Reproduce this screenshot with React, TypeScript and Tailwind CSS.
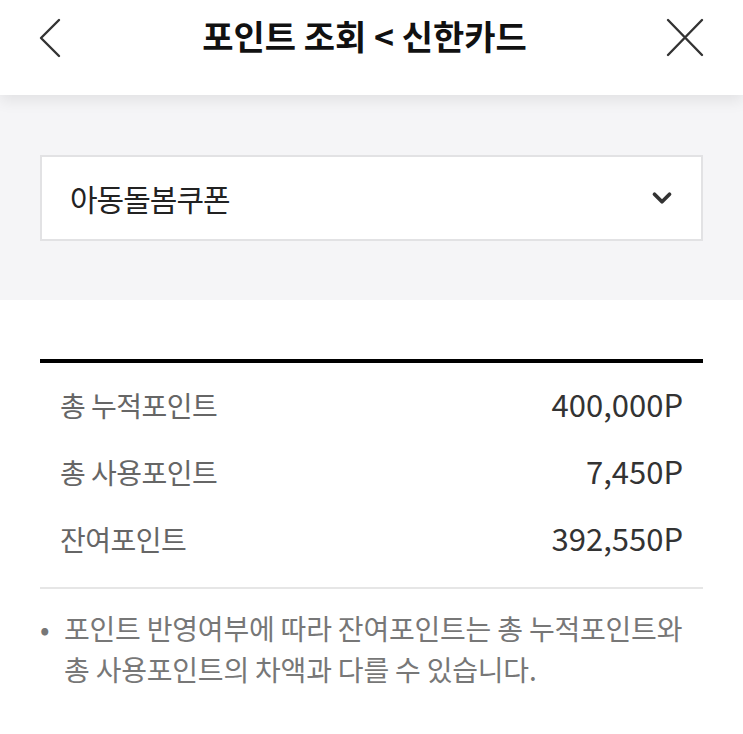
import { ChevronDown } from "lucide-react";

const rows = [
  { label: "총 누적포인트", value: "400,000" },
  { label: "총 사용포인트", value: "7,450" },
  { label: "잔여포인트", value: "392,550" },
];

const App = () => {
  return (
    <div className="w-[743px] h-[734px] bg-white overflow-hidden font-['Noto_Sans_CJK_KR','Noto_Sans',sans-serif]">
      <div className="relative z-10 h-[95px] bg-white flex items-start justify-between pl-[38px] pr-[38px] pt-[18px] shadow-[0_6px_14px_rgba(0,0,0,0.08)]">
        <svg width="26" height="40" viewBox="0 0 26 40" fill="none" stroke="#333" strokeWidth="2.4" strokeLinecap="round" strokeLinejoin="round">
          <path d="M21 2 L3 20 L21 38" />
        </svg>
        <h1 className="text-[34px] font-bold text-[#111] leading-[40px] -mt-[2px]">포인트 조회 &lt; 신한카드</h1>
        <svg width="40" height="40" viewBox="0 0 40 40" fill="none" stroke="#333" strokeWidth="2.4" strokeLinecap="round">
          <path d="M3 2 L37 37 M37 2 L3 37" />
        </svg>
      </div>
      <div className="bg-[#f5f5f7] h-[205px] px-[40px] pt-[60px]">
        <div className="h-[86px] bg-white border-2 border-[#e2e2e4] flex items-center justify-between pl-[28px] pr-[24px]">
          <span className="text-[30px] text-[#222] tracking-[-1px]">아동돌봄쿠폰</span>
          <ChevronDown size={30} strokeWidth={3} className="text-[#333]" />
        </div>
      </div>
      <div className="px-[40px] pt-[59px]">
        <div className="h-[4px] bg-black" />
        <div className="pt-[8px] pb-[15px] border-b-2 border-[#e6e6e6]">
          {rows.map((r) => (
            <div key={r.label} className="h-[67px] flex items-center justify-between pl-[20px] pr-[20px]">
              <span className="text-[28px] text-[#666] tracking-[-0.5px]">{r.label}</span>
              <span className="text-[31px] text-[#333] tracking-[0px]">{r.value}P</span>
            </div>
          ))}
        </div>
        <div className="flex pt-[19px] text-[28px] leading-[41px] text-[#777] tracking-[-0.2px]">
          <span className="w-[24px] shrink-0">•</span>
          <p className="whitespace-nowrap">
            포인트 반영여부에 따라 잔여포인트는 총 누적포인트와
            <br />총 사용포인트의 차액과 다를 수 있습니다.
          </p>
        </div>
      </div>
    </div>
  );
};

export default App;
